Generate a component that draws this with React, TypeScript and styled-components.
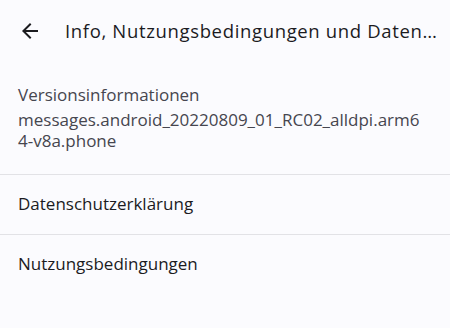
import React from 'react';
import styled, { createGlobalStyle } from 'styled-components';

const GlobalStyle = createGlobalStyle`
  html, body {
    margin: 0;
    padding: 0;
    background: #fbfbfe;
  }
  body {
    font-family: "Open Sans", Roboto, "Liberation Sans", sans-serif;
    -webkit-font-smoothing: antialiased;
  }
`;

const Screen = styled.div`
  width: 450px;
  min-height: 328px;
  background: #fbfbfe;
  color: #1b1b1f;
`;

const TopBar = styled.header`
  display: flex;
  align-items: center;
  height: 61px;
  padding: 0 10px 0 18px;
  box-sizing: border-box;
`;

const BackButton = styled.button`
  display: flex;
  align-items: center;
  justify-content: center;
  width: 24px;
  height: 24px;
  padding: 0;
  margin-right: 23px;
  border: none;
  background: none;
  color: #1b1b1f;
  flex-shrink: 0;
`;

const Title = styled.h1`
  margin: 0;
  font-size: 18.5px;
  font-weight: 400;
  letter-spacing: 0.65px;
  white-space: nowrap;
  overflow: hidden;
  text-overflow: ellipsis;
  min-width: 0;
`;

const List = styled.div`
  display: flex;
  flex-direction: column;
`;

const Item = styled.div<{ $tall?: boolean }>`
  display: flex;
  flex-direction: column;
  justify-content: center;
  min-height: 60px;
  padding: ${p => (p.$tall ? '23px 24px 23px 18px' : '0 24px 3px 18px')};
  box-sizing: border-box;
  font-size: 17px;
  line-height: 21px;
  & + & {
    border-top: 1px solid #e2e2e6;
  }
`;

const Label = styled.div<{ $muted?: boolean }>`
  color: ${p => (p.$muted ? '#46464f' : '#1b1b1f')};
`;

const Detail = styled.div`
  margin-top: 4px;
  color: #46464f;
  word-break: break-all;
`;

const ArrowBack = () => (
  <svg width="24" height="24" viewBox="0 0 24 24" fill="currentColor">
    <path d="M20 11H7.83l5.59-5.59L12 4l-8 8 8 8 1.41-1.41L7.83 13H20v-2z" />
  </svg>
);

export default function App() {
  return (
    <Screen>
      <GlobalStyle />
      <TopBar>
        <BackButton aria-label="Zurück">
          <ArrowBack />
        </BackButton>
        <Title>Info, Nutzungsbedingungen und Datenschutz</Title>
      </TopBar>
      <List>
        <Item $tall>
          <Label $muted>Versionsinformationen</Label>
          <Detail>messages.android_20220809_01_RC02_alldpi.arm64-v8a.phone</Detail>
        </Item>
        <Item>
          <Label>Datenschutzerklärung</Label>
        </Item>
        <Item>
          <Label>Nutzungsbedingungen</Label>
        </Item>
      </List>
    </Screen>
  );
}
